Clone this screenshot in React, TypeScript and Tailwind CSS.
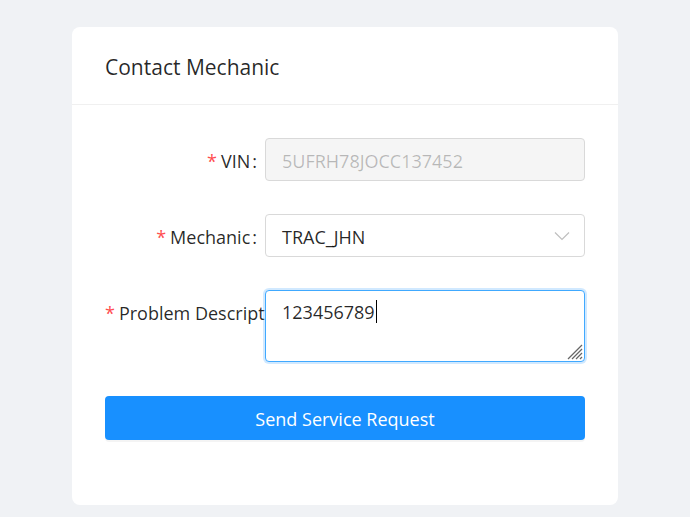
import React from 'react';

const font = { fontFamily: '"Segoe UI", "Open Sans", "Noto Sans", sans-serif' };

function Label({ text }: { text: string }) {
  return (
    <div className="h-[43px] w-[160px] shrink-0 overflow-hidden whitespace-nowrap text-right text-[18px] leading-[47px] text-black/85">
      <span className="mr-1 text-[#ff4d4f]">*</span>
      {text}
      <span className="ml-0.5 mr-2">:</span>
    </div>
  );
}

export default function App() {
  return (
    <div className="min-h-screen bg-[#f0f2f5] pl-[72px] pt-[27px]" style={font}>
      <div className="w-[546px] rounded-lg bg-white">
        <div className="flex h-[78px] items-center border-b border-[#f0f0f0] px-[33px] pt-[5px]">
          <h1 className="text-[21px] text-black/85">Contact Mechanic</h1>
        </div>

        <div className="flex flex-col px-[33px] pb-[65px] pt-[33px]">
          <div className="mb-[33px] flex">
            <Label text="VIN" />
            <div className="flex h-[43px] w-[320px] items-center rounded-sm border border-[#d9d9d9] bg-[#f5f5f5] px-4 pt-[4px] text-[18px] text-black/25">
              5UFRH78JOCC137452
            </div>
          </div>

          <div className="mb-[33px] flex">
            <Label text="Mechanic" />
            <div className="flex h-[43px] w-[320px] items-center justify-between rounded-sm border border-[#d9d9d9] bg-white pl-4 pr-[14px] text-[18px] text-black/85">
              <span className="pt-[4px]">TRAC_JHN</span>
              <svg width="16" height="10" viewBox="0 0 16 10" fill="none">
                <polyline points="1,1.5 8,8.5 15,1.5" stroke="#bfbfbf" strokeWidth="1.2" />
              </svg>
            </div>
          </div>

          <div className="mb-[34px] flex">
            <Label text="Problem Description" />
            <div className="relative h-[72px] w-[320px] rounded-sm border border-[#40a9ff] bg-white px-4 pt-[5px] text-[18px] leading-[28px] text-black/85 shadow-[0_0_0_2px_rgba(24,144,255,0.2)]">
              <span>123456789</span>
              <span className="ml-px inline-block h-[23px] w-px translate-y-[4px] bg-black" />
              <svg className="absolute bottom-[1px] right-[1px]" width="16" height="16" viewBox="0 0 16 16">
                <line x1="15" y1="1" x2="1" y2="15" stroke="#666" strokeWidth="1.3" />
                <line x1="15" y1="5" x2="5" y2="15" stroke="#666" strokeWidth="1.3" />
                <line x1="15" y1="9" x2="9" y2="15" stroke="#666" strokeWidth="1.3" />
                <line x1="15" y1="13" x2="13" y2="15" stroke="#666" strokeWidth="1.3" />
              </svg>
            </div>
          </div>

          <button
            type="button"
            className="h-[44px] w-[480px] rounded-sm bg-[#1890ff] pt-[3px] text-[18px] text-white shadow-[0_2px_0_rgba(0,0,0,0.045)]"
          >
            Send Service Request
          </button>
        </div>
      </div>
    </div>
  );
}
